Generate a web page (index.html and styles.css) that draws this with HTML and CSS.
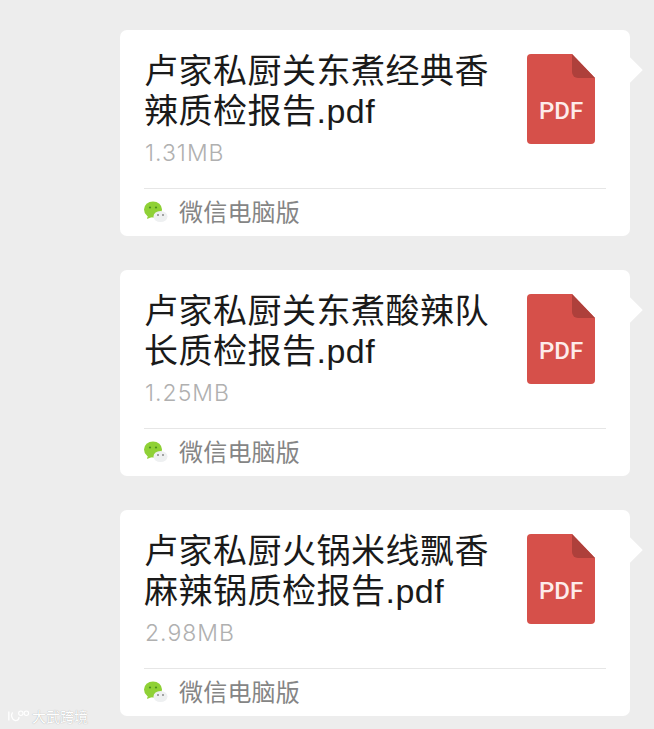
FILE: index.html
```html
<!DOCTYPE html>
<html lang="zh">
<head>
    <meta charset="UTF-8">
    <meta name="viewport" content="width=device-width, initial-scale=1.0">
    <title>微信文件</title>
    <link rel="stylesheet" href="styles.css">
</head>
<body>
<div class="chat">
    <div class="card">
        <div class="card-main">
            <div class="file-info">
                <div class="file-name">卢家私厨关东煮经典香辣质检报告.pdf</div>
                <div class="file-size">1.31MB</div>
            </div>
            <svg class="pdf-icon" viewBox="0 0 68 90">
                <path d="M4 0H45L68 24V86a4 4 0 0 1-4 4H4a4 4 0 0 1-4-4V4a4 4 0 0 1 4-4z" fill="#d6504a"/>
                <path d="M45 0L68 24H51a6 6 0 0 1-6-6z" fill="#ae403b"/>
                <text x="34" y="65" text-anchor="middle" class="pdf-label">PDF</text>
            </svg>
        </div>
        <div class="card-foot">
            <svg class="wx-icon" viewBox="0 0 24 22">
                <ellipse cx="9" cy="8.5" rx="9" ry="8" fill="#8fd136"/>
                <path d="M4 14l-1 4 5-2z" fill="#8fd136"/>
                <circle cx="6" cy="6.5" r="1.1" fill="#4c8f1f"/>
                <circle cx="12" cy="6.5" r="1.1" fill="#4c8f1f"/>
                <ellipse cx="16.5" cy="15.5" rx="7" ry="5.5" fill="#eef0f1"/>
                <circle cx="14" cy="14" r="1" fill="#8a8a8a"/>
                <circle cx="19" cy="14" r="1" fill="#8a8a8a"/>
            </svg>
            <span class="app-name">微信电脑版</span>
        </div>
    </div>

    <div class="card">
        <div class="card-main">
            <div class="file-info">
                <div class="file-name">卢家私厨关东煮酸辣队长质检报告.pdf</div>
                <div class="file-size">1.25MB</div>
            </div>
            <svg class="pdf-icon" viewBox="0 0 68 90">
                <path d="M4 0H45L68 24V86a4 4 0 0 1-4 4H4a4 4 0 0 1-4-4V4a4 4 0 0 1 4-4z" fill="#d6504a"/>
                <path d="M45 0L68 24H51a6 6 0 0 1-6-6z" fill="#ae403b"/>
                <text x="34" y="65" text-anchor="middle" class="pdf-label">PDF</text>
            </svg>
        </div>
        <div class="card-foot">
            <svg class="wx-icon" viewBox="0 0 24 22">
                <ellipse cx="9" cy="8.5" rx="9" ry="8" fill="#8fd136"/>
                <path d="M4 14l-1 4 5-2z" fill="#8fd136"/>
                <circle cx="6" cy="6.5" r="1.1" fill="#4c8f1f"/>
                <circle cx="12" cy="6.5" r="1.1" fill="#4c8f1f"/>
                <ellipse cx="16.5" cy="15.5" rx="7" ry="5.5" fill="#eef0f1"/>
                <circle cx="14" cy="14" r="1" fill="#8a8a8a"/>
                <circle cx="19" cy="14" r="1" fill="#8a8a8a"/>
            </svg>
            <span class="app-name">微信电脑版</span>
        </div>
    </div>

    <div class="card">
        <div class="card-main">
            <div class="file-info">
                <div class="file-name">卢家私厨火锅米线飘香麻辣锅质检报告.pdf</div>
                <div class="file-size">2.98MB</div>
            </div>
            <svg class="pdf-icon" viewBox="0 0 68 90">
                <path d="M4 0H45L68 24V86a4 4 0 0 1-4 4H4a4 4 0 0 1-4-4V4a4 4 0 0 1 4-4z" fill="#d6504a"/>
                <path d="M45 0L68 24H51a6 6 0 0 1-6-6z" fill="#ae403b"/>
                <text x="34" y="65" text-anchor="middle" class="pdf-label">PDF</text>
            </svg>
        </div>
        <div class="card-foot">
            <svg class="wx-icon" viewBox="0 0 24 22">
                <ellipse cx="9" cy="8.5" rx="9" ry="8" fill="#8fd136"/>
                <path d="M4 14l-1 4 5-2z" fill="#8fd136"/>
                <circle cx="6" cy="6.5" r="1.1" fill="#4c8f1f"/>
                <circle cx="12" cy="6.5" r="1.1" fill="#4c8f1f"/>
                <ellipse cx="16.5" cy="15.5" rx="7" ry="5.5" fill="#eef0f1"/>
                <circle cx="14" cy="14" r="1" fill="#8a8a8a"/>
                <circle cx="19" cy="14" r="1" fill="#8a8a8a"/>
            </svg>
            <span class="app-name">微信电脑版</span>
        </div>
    </div>
</div>

<!-- watermark in the corner -->
<div class="watermark">
    <svg class="mark-icon" viewBox="0 0 26 14">
        <path d="M2 2v10M6 3c-2 3-1 8 3 9 3 0 4-2 4-4" fill="none" stroke="#fff" stroke-width="1.4"/>
        <circle cx="15" cy="4" r="2.4" fill="none" stroke="#fff" stroke-width="1.2"/>
        <circle cx="21" cy="4" r="2.4" fill="none" stroke="#fff" stroke-width="1.2"/>
    </svg>
    <span>大武跨境</span>
</div>
</body>
</html>
```

FILE: styles.css
```css
html, body {
    height: 100%;
}
body {
    margin: 0;
    background-color: #ededed;
    font-family: Inter, "Noto Sans CJK SC", sans-serif;
    overflow: hidden;
}
.chat {
    display: flex;
    flex-direction: column;
    gap: 34px;
    padding: 30px 24px 0 120px;
}
.card {
    position: relative;
    height: 206px;
    box-sizing: border-box;
    padding: 21px 24px 0 24px;
    background-color: #fff;
    border-radius: 7px;
    display: flex;
    flex-direction: column;
}
/* little tail on the right side */
.card::after {
    content: "";
    position: absolute;
    right: -9px;
    top: 31px;
    width: 18px;
    height: 18px;
    background-color: #fff;
    transform: rotate(45deg);
}
.card-main {
    display: flex;
    justify-content: space-between;
    height: 137px;
}
.file-info {
    width: 350px;
}
.file-name {
    font-family: "Liberation Sans", "Noto Sans CJK SC", sans-serif;
    font-size: 34px;
    line-height: 40px;
    letter-spacing: 0.5px;
    color: #1a1a1a;
}
.file-size {
    margin-top: 9px;
    margin-left: 1px;
    font-size: 23px;
    font-weight: 300;
    line-height: 26px;
    letter-spacing: 1px;
    color: #b0b0b0;
}
.pdf-icon {
    width: 68px;
    height: 90px;
    margin-top: 3px;
    margin-right: 11px;
    flex-shrink: 0;
}
.pdf-label {
    font-family: Roboto, sans-serif;
    font-size: 24px;
    font-weight: 500;
    fill: #fdecea;
}
.card-foot {
    position: relative;
    z-index: 1;
    border-top: 1px solid #e6e6e6;
    display: flex;
    align-items: center;
    height: 47px;
    padding-bottom: 4px;
    box-sizing: border-box;
}
.wx-icon {
    width: 24px;
    height: 22px;
    margin-top: 4px;
    flex-shrink: 0;
    filter: blur(0.4px);
}
.app-name {
    margin-left: 11px;
    font-size: 24px;
    letter-spacing: 0.2px;
    color: #858585;
}
.watermark {
    position: absolute;
    left: 7px;
    top: 706px;
    display: flex;
    align-items: center;
    gap: 1px;
    font-size: 14px;
    color: #fff;
    text-shadow: 0 0 1px #999;
}
.mark-icon {
    width: 24px;
    height: 14px;
}
```
